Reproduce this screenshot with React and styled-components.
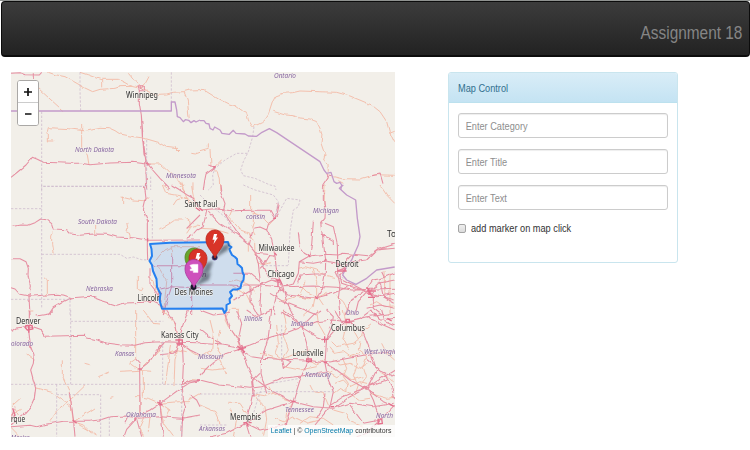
import React from "react";
import styled, { createGlobalStyle } from "styled-components";

const GlobalStyle = createGlobalStyle`
  * { box-sizing: border-box; }
  body {
    margin: 0;
    background: #fff;
    overflow: hidden;
    font-family: "Liberation Sans", Arial, sans-serif;
  }
`;

const Page = styled.div`
  width: 750px;
  height: 450px;
  padding-top: 1px;
  border-top: 1px solid #8f9290;
`;

const Navbar = styled.header`
  display: flex;
  justify-content: flex-end;
  align-items: center;
  width: 749px;
  height: 56px;
  margin-left: 1px;
  margin-top: -1px;
  padding: 9px 7px 0 0;
  border: 1px solid #0c0c0c;
  border-bottom-width: 2px;
  border-radius: 4px;
  background: linear-gradient(#3c3c3c, #222);
`;

const Brand = styled.span`
  color: #858585;
  font-size: 17.6px;
  line-height: 20px;
  white-space: nowrap;
  transform: scaleX(0.875);
  transform-origin: right center;
`;

const Content = styled.main`
  display: flex;
  align-items: flex-start;
  gap: 53px;
  padding: 15px 0 0 11px;
`;

const MapFrame = styled.section`
  position: relative;
  width: 384px;
  height: 365px;
  overflow: hidden;
  background: #f2efe9;
`;

const MapSvg = styled.svg`
  display: block;
  width: 384px;
  height: 365px;
`;

const ZoomControl = styled.div`
  position: absolute;
  left: 6px;
  top: 8px;
  width: 22px;
  height: 46px;
  border: 1px solid #aaa8a6;
  border-radius: 3px;
  background: #fff;
  overflow: hidden;
`;

const ZoomButton = styled.button`
  display: flex;
  align-items: center;
  justify-content: center;
  width: 20px;
  height: 22px;
  padding: 0;
  border: 0;
  border-bottom: ${(p) => (p.$divided ? "1px solid #ccc" : "0")};
  background: #fff;
`;

const Attribution = styled.div`
  position: absolute;
  right: 0;
  bottom: 0;
  width: 127px;
  height: 12px;
  overflow: hidden;
  background: rgba(255, 255, 255, 0.75);
`;

const AttributionText = styled.div`
  width: max-content;
  padding-left: 3px;
  color: #333;
  font-size: 7.8px;
  line-height: 11px;
  transform: scaleX(0.89);
  transform-origin: left center;
`;

const MapLink = styled.a`
  color: #0078a8;
`;

const Panel = styled.section`
  width: 230px;
  height: 191px;
  border: 1px solid #c9e5ee;
  border-radius: 3px;
  background: #fff;
`;

const PanelHeading = styled.div`
  height: 30px;
  padding: 0 9px;
  border-bottom: 1px solid #bce1ee;
  border-radius: 2px 2px 0 0;
  background: linear-gradient(#d9edf7, #c4e3f3);
  color: #31708f;
  line-height: 28px;
`;

const PanelBody = styled.form`
  display: flex;
  flex-direction: column;
  gap: 11px;
  padding: 10px 9px 0;
`;

const Narrow = styled.span`
  display: inline-block;
  font-size: 11px;
  white-space: nowrap;
  transform: scaleX(0.836);
  transform-origin: left center;
`;

const FieldFrame = styled.div`
  width: 210px;
  height: 25px;
  border: 1px solid #ccc;
  border-radius: 3px;
  box-shadow: inset 0 1px 1px rgba(0, 0, 0, 0.07);
  overflow: hidden;
`;

const Field = styled.input`
  display: block;
  width: 248px;
  height: 23px;
  padding: 1px 8px 0;
  border: 0;
  outline: 0;
  background: transparent;
  color: #555;
  font: 11px "Liberation Sans", Arial, sans-serif;
  transform: scaleX(0.836);
  transform-origin: left center;
  &::placeholder { color: #8e8e8e; opacity: 1; }
`;

const CheckRow = styled.label`
  display: flex;
  align-items: center;
  gap: 5px;
  height: 14px;
  color: #333;
`;

const Check = styled.input`
  appearance: none;
  width: 8px;
  height: 9px;
  margin: 0;
  border: 1px solid #a4a4a4;
  border-radius: 2px;
  background: linear-gradient(#eee, #dcdcdc);
`;

const Dashed = styled.path`
  fill: none;
  stroke: #cbb6cb;
  stroke-width: 2.2;
  stroke-dasharray: 7 5;
`;
const Border = styled.path`
  fill: none;
  stroke: #c39aca;
  stroke-width: 4;
  stroke-linejoin: round;
`;
const Minor = styled.path`
  fill: none;
  stroke: #f3bba8;
  stroke-width: 2.8;
  stroke-linejoin: round;
`;
const Major = styled.path`
  fill: none;
  stroke: #e68fa2;
  stroke-width: 3.2;
  stroke-linejoin: round;
`;
const Hub = styled.path`
  fill: none;
  stroke: #e5708d;
  stroke-width: 4;
`;

const CityText = styled.text`
  fill: #303030;
  stroke: #f7f4ef;
  stroke-width: 1.3px;
  stroke-opacity: 0.75;
  paint-order: stroke;
  font: 8.3px "Noto Sans", sans-serif;
`;
const StateText = styled.text`
  fill: #85659f;
  stroke: #f5f1ec;
  stroke-width: 1px;
  stroke-opacity: 0.7;
  paint-order: stroke;
  font: italic 7.9px "Noto Sans", sans-serif;
`;

/* Each sheet is drawn at three units per pixel from its own origin. */
const sheets = [
  {
    x: 0, y: 60,
    dashed: "M240 37V90L242 153M514 37V126M125 155V390M130 379H440M440 240V390M452 350V390",
    border: "M33 153H514V126L525 126 530 150 532 170 540 173 550 185 556 179 566 181 573 188 582 182 588 186 600 180",
    minor: "M145 37L165 44 195 50 220 64 255 84 278 95 300 88 345 85 360 80 395 79 425 86 450 97 475 103 500 102 520 97 550 95 570 90 600 89M240 37L262 44 305 60 305 82M305 58H355L375 68 395 80M385 37L425 85M447 50L428 85M115 85L150 117 190 153M552 95L562 120 568 180M142 215L145 203 205 206 250 212 275 207 300 202 325 203 345 212 360 222 400 230 430 234 475 247 500 262 530 266 538 274M142 215L138 217 142 220V243H160M245 192V265L262 285 267 315M574 280L586 282 600 277M445 312H480L500 330 515 345 545 365 550 390M530 270L525 258M541 365L552 378M579 367V390",
    major: "M33 40L60 38 75 44 118 45 125 37M100 37V58M33 352L60 330 78 315 97 292 112 298 130 307 210 310 245 310 270 314 330 309 400 307 440 312 452 313M418 90V130L424 165 427 230 432 280 442 310 458 330 480 355 510 385M424 165L430 240 437 300 440 390M414 80L436 80 436 92 418 92ZM419 83L431 89",
    hub: "M439 309L445 314",
  },
  {
    x: 200, y: 60,
    dashed: "M162 200L158 230 145 275 130 305 122 330 130 347 165 355 210 375 225 378 228 390M142 280H110L75 300 45 325 38 345 40 375 25 390",
    border: "M0 182L12 182 18 190 27 192 30 205 39 210 44 201 60 210 66 220 88 223 100 211 108 220 135 222 145 228 170 229 186 217 208 206 230 218 360 305 372 330 380 340 393 337 402 365 410 370 420 367 425 375 422 390",
    minor: "M0 91L15 92 55 117 85 132 105 138 125 153 140 160 145 180 158 200M160 200L185 188 195 180 205 165 218 125 227 108 250 100 278 98 300 93 410 97 450 108 515 135 540 155 560 185 568 215 584 248M568 220L584 214M220 154L255 165 280 167 300 174 330 177 350 185 360 205 366 225 363 250 375 285 371 300 384 312 385 335M400 350L425 356 480 357 525 344 584 346M0 272L25 265 25 253M30 270L33 315M65 300L40 324 52 335 58 360 59 390M415 362L430 370",
    major: "M25 315L45 322 18 342 14 362 10 390M380 340L385 350 368 375 367 390M516 347L540 342 543 350 549 371M385 345L395 347M30 318L48 320",
    hub: "M40 321H47",
  },
  {
    x: 0, y: 185,
    dashed: "M125 0V370M130 4H430M33 71H125M457 45V165M125 208H360L380 220 400 216 425 224 445 225 455 232M33 343H210V390",
    border: "",
    minor: "M368 35V60M368 37L400 45 430 47 445 38M370 38L362 36M380 112L383 128 378 140 390 146V162M160 140L155 150 155 175 160 208M287 120V145M132 275L142 285V323L135 330M410 275H420M412 275V313L425 317 430 307M465 230L480 210 495 195 515 185H600M515 185V210M470 240L500 290 490 390M560 130L590 120 600 122M487 0L498 25 540 32 570 47 590 70M520 60L530 45 550 38 565 40M478 135L510 115 525 105 550 105M85 378H100M450 275L460 290 465 315 480 322M540 0L550 15 570 60M490 0L510 16M555 98L570 110 570 130 560 145M575 3L580 35 588 52",
    major: "M33 125L60 120 85 121 105 113 122 102 140 104 155 116 160 132 200 134 213 147 240 151 280 147 320 148 350 156 400 158 445 166 600 165M433 0L438 40 430 75 442 105V185L443 225M33 221L60 221 78 230 85 250 84 270 91 300 87 335 90 390M33 308L45 312 60 328 90 334 170 328 190 330 215 338 270 334 300 345 350 361 375 354 460 351 490 365M215 338L195 348 160 368 145 390M450 250V300L470 325 481 350M482 312L510 305 600 308M600 130L590 135 577 150 560 160M515 0L535 12 560 29 580 40 600 72M515 210V305L500 350 490 390M600 90L575 115 560 130M575 220V390M460 242H600M475 322V345",
    hub: "M588 68L600 77M443 160V170M477 318L485 327M445 350L453 352",
  },
  {
    x: 200, y: 185,
    dashed: "M130 0L165 15 220 30 235 50 230 75 225 95M220 95L235 85 260 40 300 45 295 65 280 75 270 140 265 240M185 242H265M415 270L430 280M0 30L25 55 80 100 100 145",
    border: "M430 0L418 10 440 30 467 45 472 100 480 155 475 180 455 225 440 245 428 270 440 285 468 298 500 280 530 255 584 246",
    minor: "M152 30V75M154 77L165 87 183 92 195 105 210 120 225 103M160 80V110L155 130 165 150M95 70L85 95 120 133 150 145 164 172 165 210M85 290L110 285 150 300 165 325M375 0L372 60M90 300L140 330 155 360M290 335L325 341 350 338 380 325M295 250L315 245 350 255 380 275 405 280M340 255L350 290 350 330 370 360M240 350L300 330 315 290M540 0L560 30 584 55M510 360L530 350 554 365 584 363M0 130L40 132 85 145M345 340L340 365 310 390M145 170V200M170 232L190 240 210 233M405 330L430 350 450 390M95 370H115V390M570 265V390M552 258L555 330M300 300L320 320 350 334",
    major: "M0 75L45 71 95 77 154 76 210 76 225 103 205 118 200 135 215 165 224 205 229 250 237 293M60 0L63 25 75 55 70 80 112 145 125 160 148 178 170 205 225 210M235 55L225 103M225 103L235 90M200 135L180 126 160 130 148 178M20 75L10 125 0 130M25 78L55 112 105 145 148 178M165 205L185 230 205 275 235 285M165 205L175 235 183 310 180 360 184 390M210 210L195 235 180 250M237 293L248 306 280 297 295 265 298 230 328 213 375 208 415 210 430 205 505 212 535 190 584 175M295 142L300 185 313 205 328 213M328 213L335 180 340 110M370 0V45L376 80 375 100 362 115 367 150 377 225 376 265 367 310 350 340M375 115L400 125 412 180 413 235M363 148L400 170 400 180M299 230L340 235 377 228 413 235 434 249 455 230 500 225 530 195 584 190M413 210V265L420 300 415 340 420 390M376 267H345L300 270 293 295M434 249L405 260 412 275 500 320 584 345M434 249L420 270 425 295 500 320M250 305L340 303 410 307 455 315 584 310M248 306L260 350 280 390M237 293L215 285 180 300 130 330 100 345M130 300L180 300 237 305 260 330 345 340 400 325 455 300M455 210L440 225 434 249M100 265L150 265 180 290M150 300L150 345 175 390M0 300L90 300 130 303M210 325L250 350 300 370 350 390M245 306L230 330 220 370 225 390M502 310L518 285 540 282 584 264M510 320L535 295 584 285M500 325L530 335 584 325M520 320V370L545 390M490 320L455 345 435 390M540 290L550 335 584 355M500 320L475 350 465 390M545 260L552 275M535 195L547 190 560 188M500 370L540 360 584 370",
    hub: "M0 70L8 77M224 204L230 211M227 285H240L247 300M234 285V305M435 245V257M412 258H440M500 306L515 332M500 318H528M504 337H525M345 334L353 342M221 100H228M374 225H380M325 209L331 216M507 310V330",
  },
  {
    x: 0, y: 310,
    dashed: "M212 0V223M212 34H490M33 223H545V380M170 223V380M170 254H302V380M328 323V380M488 95V223",
    border: "",
    minor: "M407 0V147L389 160 410 175 420 180M80 132L103 150M187 151V200L208 245 220 335M105 233L155 247 190 273 212 291M255 227L205 275 170 305 150 335M221 335L285 294M221 335L290 375M330 186L295 200M360 184L420 181 455 184M33 290L60 266M33 315L65 298M405 260H420V320M430 183V260M490 95L470 130 455 145 420 180M480 280L490 340 520 380M480 280L535 275 570 275M512 100L500 195 495 225M536 100L525 150 522 225M480 280L510 300 500 320M430 262L445 265 480 280M435 320L420 355 430 380M450 320L445 365M257 160L272 164M330 262L340 260M565 270L600 250M490 0L525 42 537 95M40 288L55 315M540 98L580 130 600 140M430 0L460 40 480 42M506 130L535 120 560 125M33 352L60 380M221 335L250 345 275 370M550 222L590 205",
    major: "M33 64L48 54 80 50 95 52 125 62 137 79 255 76 262 84 290 90 320 99 360 104 405 106 435 98 470 96 490 95 535 97 600 98M88 0V50L87 70 92 110 102 137 100 160 92 180 100 210 107 235 103 265 90 293 75 310 55 325 33 345M110 18L150 11 160 0M407 147L419 160 420 320M419 180L445 160 465 130 490 97M33 350L90 346 110 350 140 343 190 334 270 334 300 330 330 320 380 318 410 325 480 320 545 325 600 315M208 245L215 290 221 335 225 380M410 325L380 358 372 380M410 328L425 380M565 0L547 50 537 95M500 0L527 42 537 97M480 280L450 300 410 320M480 280L508 260 535 240 570 218 600 213M537 98L530 120 520 130 480 134M547 98L550 165 547 230 550 270 557 290 548 320 545 380M537 97L570 120 600 135M600 212L570 213 545 225M570 255L590 270 600 290M480 280L490 380M45 290L33 325M385 318L375 340",
    hub: "M78 46H96L98 57 82 60 75 52ZM86 48V68M526 90H547V102H530M537 84V108M472 276L488 286M480 270V287M415 177H426M218 330L230 340M548 320V333M590 210H600M90 105V113M405 322V332M38 295L45 315 33 330",
  },
  {
    x: 200, y: 310,
    dashed: "M0 252H160L190 245H400M155 330L175 260 185 235M245 45V150M0 345H80M215 220L300 205",
    border: "",
    minor: "M90 0L75 30 85 50 110 80 120 115M30 30L40 70 35 120 0 140M180 130L240 150 290 130 330 120M395 95L410 110 430 105 460 100 485 80 490 60 515 40M390 110L405 130 430 125 450 140 480 130M400 150L420 165 450 160 475 175 505 160M385 185L410 200 430 190 455 210 490 200M405 220L430 210 450 230 480 215 520 225M400 250L420 235 450 250 475 270 510 265M430 150L440 175 430 200 445 220 440 245M465 140L470 170 460 200 475 225 465 255M500 140L490 170 500 200 485 220M330 225L340 245 370 250 385 285M280 275L260 310 255 345M225 325L250 335 280 320 320 340 360 330M210 230L220 250 250 265 280 275M160 255L190 260 220 250M165 260L195 290 200 330 190 380M85 280L120 280 140 310M0 285L45 305 60 340M400 300L435 310 450 335 490 350M300 340L330 320 370 325 400 345M250 0L260 50 250 75 265 120 250 145M350 0L355 40 375 75M430 0L440 50 430 90 445 120M460 60L480 95 475 120 500 140M325 150L350 165 375 150M230 45L235 100 225 130 250 150M0 175L40 180 80 175M60 60L50 110 70 140M25 130L60 150 80 195M330 190L375 200 400 180M250 170L300 180 350 170M545 100L560 130 584 150M540 185L560 200 584 215M510 250L560 265 584 262M90 295L110 330 100 380",
    major: "M0 100L65 105 120 115 150 105 215 80 260 68 305 50 350 35 400 30 440 35 500 20 584 10M120 118L155 140 185 145 240 148 320 150 375 158 430 148 510 132 584 125M125 120L140 165 157 200 160 240 150 290 138 335M0 210L60 225 150 235 185 230 215 218 250 205 330 195 385 185M0 195L35 160 80 130 120 118M70 0L85 45 110 85 122 110M215 0L205 80 185 150 183 190 200 250M140 0L170 20 215 0M305 50L320 100 325 150 300 210 280 275 255 345M305 52L350 80 378 90M380 0L400 20 395 50 380 85 375 160 385 210 400 245 390 290 345 345M280 275L340 290 400 295 450 260 505 230 584 180M280 275L200 300 138 340 80 370 30 380M157 200L210 240 280 275M385 290L430 260 490 235 560 210M375 160L410 180 450 210 505 240 550 275 584 290M138 340L150 380M138 340L180 360 250 345M250 0L280 20 305 50M305 50L270 20 240 5M305 50L345 10 360 0M0 0L40 15 90 10M110 0L125 40 115 90 125 120M443 30L400 65 380 88M443 30L490 70 510 120 530 180 500 240M500 20L550 45 584 60M510 0L540 30 584 25M545 0L555 35 584 48M500 145L540 180 584 200M400 295L450 280 520 290 584 280M505 240L520 270 540 330M540 330L500 370 470 380M540 330L584 285M0 55L30 80 65 105M180 190L155 215 160 260M245 145L270 155 250 175 245 150M375 250L370 290 350 325M550 185L575 230 584 270M450 285L490 340 540 330M405 0L425 35 480 25 515 0",
    hub: "M112 108L135 126M113 120L138 112M125 105L132 130M374 79V98M367 88H385M300 50H311M320 147H334V155H320ZM275 274H287M130 338H155M139 335L145 350M438 28H448V38H438ZM534 328L545 326 547 340 535 342ZM392 290H402M371 157H381M562 25L575 33M565 280L580 288",
  },
];

const states = [
  ["Ontario", 274, 77.7, 22], ["North Dakota", 75, 152.2, 39], ["Minnesota", 166, 177.7, 30],
  ["South Dakota", 78, 224.2, 39], ["consin", 246, 219, 19], ["Michigan", 313, 212.7, 26],
  ["Nebraska", 86, 290.7, 27], ["Illinois", 244, 320.7, 18.5], ["Indiana", 291, 325.7, 22],
  ["Ohio", 346, 315, 13], ["olorado", 11, 345.7, 22], ["Kansas", 115, 356.2, 19.5],
  ["Missouri", 198, 358.7, 25], ["West-Virginia", 364, 353.7, 39], ["Kentucky", 305, 376.7, 26],
  ["Oklahoma", 126, 416.7, 30], ["Tennessee", 285, 411.7, 29], ["North", 376, 418.2, 17],
  ["Arkansas", 199, 430.7, 26], ["Mexico", 11, 439.7, 19],
];

const cities = [
  ["Winnipeg", 126, 97.7, 32], ["Saint Paul", 184.5, 207.2, 33], ["Milwaukee", 258.5, 251.2, 36],
  ["Detroit", 335.5, 266.7, 23], ["Chicago", 267.5, 277.2, 27], ["To", 387, 236.7, 9],
  ["Lincoln", 137.5, 301.2, 23.5], ["Denver", 16, 324.2, 24.5], ["Kansas City", 161, 338.2, 37.5],
  ["Columbus", 331, 331.2, 34], ["Louisville", 292.5, 356.2, 31], ["rque", 11, 421.5, 14],
  ["Memphis", 230, 420.2, 31],
];

function Pin({ x, y, color, edge, icon }) {
  return (
    <g transform={`translate(${x} ${y})`}>
      <path d="M0 0C-2-6-9-10.5-9-18.5C-9-24-5-28-0.2-28S9-24 9-18.5C9-10.5 2-6 0 0Z" fill={color} stroke={edge} strokeWidth=".8" />
      {icon === "bolt" && <path d="M-1-24H2.2L1-20.5H3L-1.6-13.8-.4-18.3H-2.5Z" fill="#fff" />}
      {icon === "cup" && <path d="M-4.2-22.3L-1-23.2H4V-15H-.8V-16.8H-3.8V-18.5H-2Z" fill="#fff" stroke="#f7d9f2" strokeWidth=".5" />}
    </g>
  );
}

function MapDrawing() {
  return (
    <MapSvg viewBox="11 72 384 365" aria-label="Map of the Midwest">
      <defs>
        <filter id="soft" x="-50%" y="-50%" width="200%" height="200%"><feGaussianBlur stdDeviation="1.6" /></filter>
        <filter id="winding" filterUnits="userSpaceOnUse" x="11" y="72" width="384" height="365" colorInterpolationFilters="sRGB">
          <feTurbulence type="fractalNoise" baseFrequency="0.12" numOctaves="2" seed="7" result="noise" />
          <feDisplacementMap in="SourceGraphic" in2="noise" scale="3.5" xChannelSelector="R" yChannelSelector="G" />
        </filter>
      </defs>
      <g filter="url(#winding)">
        {sheets.map((s) => (
          <g key={`${s.x}-${s.y}`} transform={`translate(${s.x} ${s.y}) scale(.33333)`}>
            <Minor d={s.minor} />
            <Major d={s.major} />
          </g>
        ))}
      </g>
      {sheets.map((s) => (
        <g key={`${s.x}-${s.y}`} transform={`translate(${s.x} ${s.y}) scale(.33333)`}>
          <Dashed d={s.dashed} />
          {s.border && <Border d={s.border} />}
          <Hub d={s.hub} />
        </g>
      ))}
      {states.map(([name, x, y, w]) => (
        <StateText key={name} x={x} y={y} textLength={w} lengthAdjust="spacingAndGlyphs">{name}</StateText>
      ))}
      {cities.map(([name, x, y, w]) => (
        <CityText key={name} x={x} y={y} textLength={w} lengthAdjust="spacingAndGlyphs">{name}</CityText>
      ))}
      <path
        d="M150 244L170 242.7 228 242 229 245.5 231.5 247 229.5 249 230 251 232 255 235 257 237 259 237.5 264 240 266 242 268 242.5 272 244 275 243.5 280 241.5 283 240.5 288 237 289.5 233 289.5 230 292 232 296 229.5 299 230 303 226.5 305 226.5 310 224.5 313 222.5 308.5 162 308.7 159.5 300 160.5 294 157 287 156.5 279 153 271 152 265 149.5 261 152 256 151.5 249Z"
        fill="#3388ff" fillOpacity=".18" stroke="#2580f0" strokeWidth="2" strokeLinejoin="round"
      />
      <CityText x="174.5" y="295" textLength="38.5" lengthAdjust="spacingAndGlyphs">Des Moines</CityText>
      <StateText x="202" y="277" textLength="5">n</StateText>
      <g fill="#15202c" opacity=".5" filter="url(#soft)">
        <path d="M215 258L222 246 230 243 228 250Z" />
        <path d="M194 287L203 275 211 272 209 280Z" />
        <path d="M199 278L206 263 213 261 210 271Z" />
      </g>
      <circle cx="214.7" cy="257.5" r="2.6" fill="#24203f" stroke="#593b80" strokeWidth=".7" />
      <circle cx="193.5" cy="287" r="3" fill="#17172c" />
      <Pin x={215} y={258} color="#d83428" edge="#b9271d" icon="bolt" />
      <Pin x={194} y={276} color="#68a52c" edge="#50841f" />
      <Pin x={198} y={277} color="#d83428" edge="#b9271d" icon="bolt" />
      <Pin x={194} y={287.5} color="#ce50bc" edge="#a73a9a" icon="cup" />
    </MapSvg>
  );
}

function ZoomGlyph({ plus }) {
  return (
    <svg width="10" height="10" viewBox="0 0 10 10" fill="none" stroke="#111" strokeWidth="1.7">
      <path d={plus ? "M1 5H9M5 1V9" : "M2 5H8.5"} />
    </svg>
  );
}

export default function App() {
  return (
    <>
      <GlobalStyle />
      <Page>
        <Navbar><Brand>Assignment 18</Brand></Navbar>
        <Content>
          <MapFrame>
            <MapDrawing />
            <ZoomControl>
              <ZoomButton $divided aria-label="Zoom in"><ZoomGlyph plus /></ZoomButton>
              <ZoomButton aria-label="Zoom out"><ZoomGlyph /></ZoomButton>
            </ZoomControl>
            <Attribution>
              <AttributionText>
                <MapLink>Leaflet</MapLink> | © <MapLink>OpenStreetMap</MapLink> contributors
              </AttributionText>
            </Attribution>
          </MapFrame>
          <Panel>
            <PanelHeading><Narrow>Map Control</Narrow></PanelHeading>
            <PanelBody>
              {["Enter Category", "Enter Title", "Enter Text"].map((label) => (
                <FieldFrame key={label}><Field placeholder={label} /></FieldFrame>
              ))}
              <CheckRow><Check type="checkbox" /><Narrow>add marker on map click</Narrow></CheckRow>
            </PanelBody>
          </Panel>
        </Content>
      </Page>
    </>
  );
}
